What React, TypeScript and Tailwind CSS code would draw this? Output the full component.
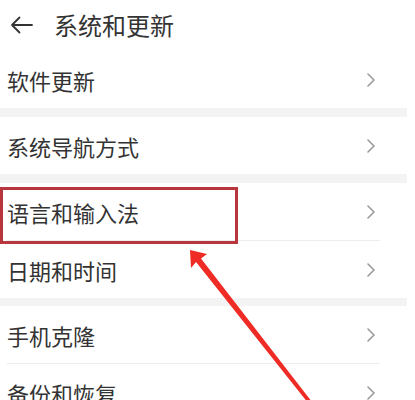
import React from 'react';

type Row = { label: string };

const groups: Row[][] = [
  [{ label: '软件更新' }],
  [{ label: '系统导航方式' }],
  [{ label: '语言和输入法' }, { label: '日期和时间' }],
  [{ label: '手机克隆' }, { label: '备份和恢复' }],
];

const Chevron = () => (
  <svg width="10" height="16" viewBox="0 0 10 16" fill="none">
    <path d="M2 2 L8 8 L2 14" stroke="#9a9a9a" strokeWidth="1.6" strokeLinecap="round" strokeLinejoin="round" />
  </svg>
);

const SettingRow: React.FC<{ label: string; last: boolean }> = ({ label, last }) => (
  <div className="flex flex-col w-[380px]">
    <div className="h-[57px] flex items-center justify-between pl-[7px] pr-[4px]">
      <span className="text-[22px] text-[#333333] leading-none">{label}</span>
      <Chevron />
    </div>
    {!last && <div className="h-px bg-[#ececec] ml-[7px]" />}
  </div>
);

export default function App() {
  return (
    <div
      className="relative w-[415px] h-[400px] overflow-hidden bg-white"
      style={{ fontFamily: '"Noto Sans CJK SC", "Noto Sans", sans-serif' }}
    >
      <div className="h-[50px] flex items-center pl-[10px]">
        <svg width="24" height="18" viewBox="0 0 24 18" fill="none">
          <path d="M22 9 H2 M9.5 1.5 L2 9 L9.5 16.5" stroke="#333333" strokeWidth="1.8" strokeLinecap="round" strokeLinejoin="round" />
        </svg>
        <span className="ml-[20px] text-[24px] text-[#333333] leading-none">系统和更新</span>
      </div>

      {groups.map((group, gi) => (
        <div key={gi}>
          {gi > 0 && <div className={`w-[407px] bg-[#f3f3f3] ${gi === 3 ? 'h-[8px]' : 'h-[9px]'}`} />}
          <div className={gi === 0 ? 'pt-[1px]' : ''}>
            {group.map((row, ri) => (
              <SettingRow key={row.label} label={row.label} last={ri === group.length - 1} />
            ))}
          </div>
        </div>
      ))}

      {/* annotation */}
      <div className="absolute left-0 top-[187px] w-[238px] h-[57px] border-[3px] border-[#b9363f]" />
      <svg className="absolute left-0 top-0" width="415" height="400" viewBox="0 0 415 400">
        <polygon
          points="190,250 207,254 201,258.5 319,411 316,413 196,262 191,268"
          fill="#ee2b25"
        />
      </svg>
    </div>
  );
}
